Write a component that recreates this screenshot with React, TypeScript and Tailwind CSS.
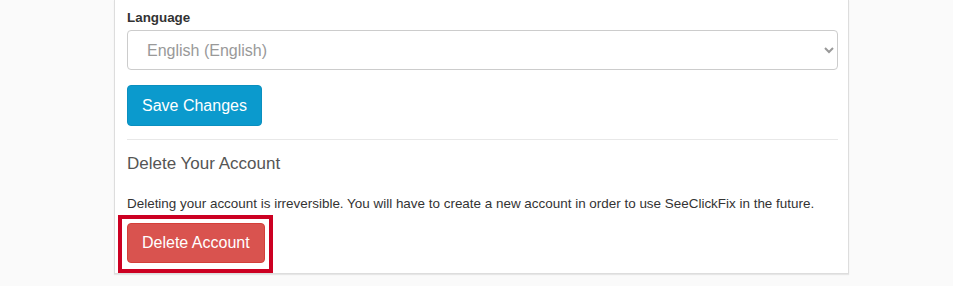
import React from "react";

export default function App() {
  return (
    <div className="w-[953px] h-[286px] bg-[#fafafa] overflow-hidden" style={{ fontFamily: '"Liberation Sans", Arial, sans-serif' }}>
      <div className="ml-[114px] w-[735px] bg-white border-x border-b border-[#dddddd] shadow-[0_1px_1px_rgba(0,0,0,0.08)] pl-[12px] pr-[10px] pt-[9px] pb-[10px]">
        <label className="block text-[13.4px] leading-[18px] font-bold text-[#333333]">Language</label>
        <div className="mt-[3px] relative">
          <select
            className="block w-full h-[40px] rounded-[4px] border border-[#cccccc] bg-white pl-[15px] pr-[8px] text-[16px] text-[#999999] outline-none"
            defaultValue="en"
          >
            <option value="en">English (English)</option>
          </select>
        </div>
        <button className="mt-[15px] h-[41px] rounded-[4px] border border-[#0a8fbf] bg-[#0b9acd] px-[14px] text-[16px] text-white">
          Save Changes
        </button>
        <div className="mt-[13px] h-px bg-[#e8e8e8]" />
        <h3 className="mt-[14px] text-[17px] leading-[20px] text-[#555555]">Delete Your Account</h3>
        <p className="mt-[21px] text-[13.45px] leading-[18px] text-[#333333]">
          Deleting your account is irreversible. You will have to create a new account in order to use SeeClickFix in the future.
        </p>
        <div className="mt-[10px] relative inline-block">
          <div className="absolute -left-[9px] -right-[8px] -top-[8px] -bottom-[10px] border-[4px] border-[#cc0022]" />
          <button className="relative h-[40px] rounded-[4px] border border-[#d43f3a] bg-[#d9534f] px-[14px] text-[16px] text-white">
            Delete Account
          </button>
        </div>
      </div>
    </div>
  );
}
